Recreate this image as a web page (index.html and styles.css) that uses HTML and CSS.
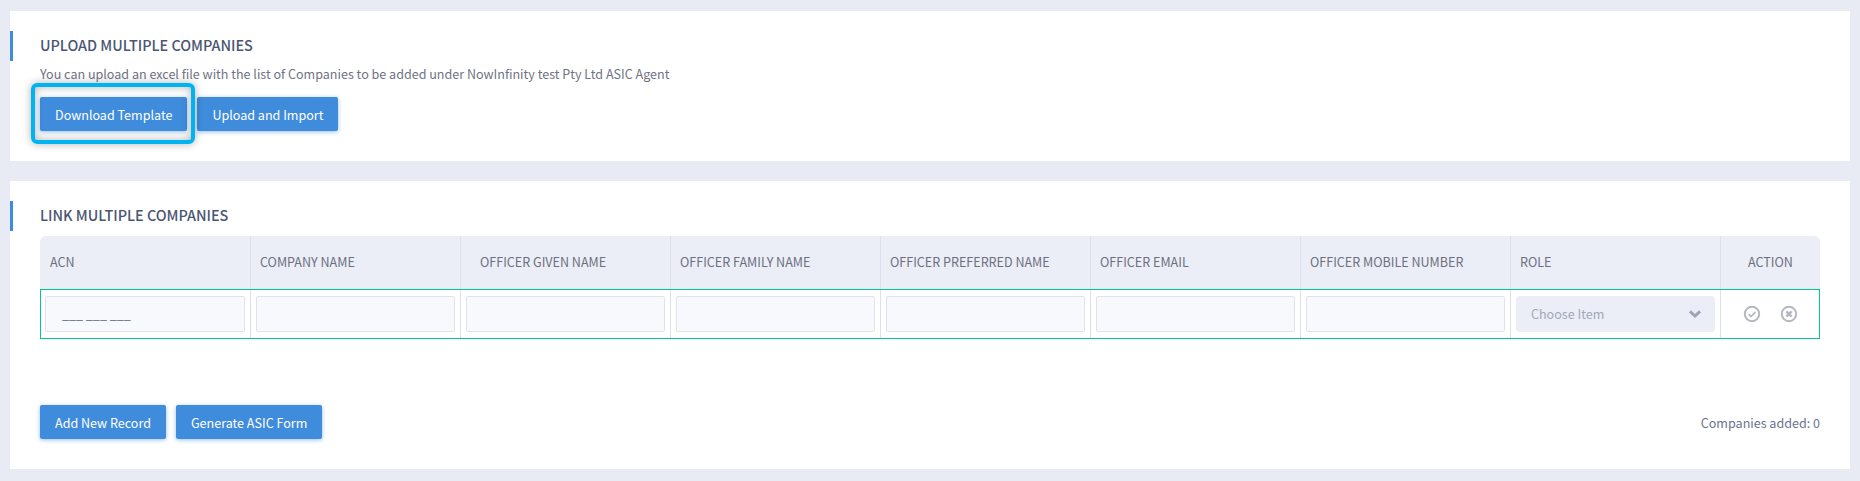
FILE: index.html
```html
<!DOCTYPE html>
<html lang="en">
<head>
<meta charset="utf-8">
<title>Upload Multiple Companies</title>
<link rel="stylesheet" href="styles.css">
</head>
<body>
<section class="card card-upload">
  <h2 class="title">UPLOAD MULTIPLE COMPANIES</h2>
  <p class="lead">You can upload an excel file with the list of Companies to be added under NowInfinity test Pty Ltd ASIC Agent</p>
  <div class="btn-row">
    <span class="highlight-wrap">
      <button class="btn" type="button">Download Template</button>
      <span class="highlight"></span>
    </span>
    <button class="btn" type="button">Upload and Import</button>
  </div>
</section>
<section class="card card-link">
  <h2 class="title">LINK MULTIPLE COMPANIES</h2>
  <div class="table">
    <div class="row head">
      <div class="th">ACN</div>
      <div class="th">COMPANY NAME</div>
      <div class="th th-wide">OFFICER GIVEN NAME</div>
      <div class="th">OFFICER FAMILY NAME</div>
      <div class="th">OFFICER PREFERRED NAME</div>
      <div class="th">OFFICER EMAIL</div>
      <div class="th">OFFICER MOBILE NUMBER</div>
      <div class="th">ROLE</div>
      <div class="th th-action">ACTION</div>
    </div>
    <div class="row body">
      <div class="td"><div class="input input-mask">___ ___ ___</div></div>
      <div class="td"><div class="input"></div></div>
      <div class="td"><div class="input"></div></div>
      <div class="td"><div class="input"></div></div>
      <div class="td"><div class="input"></div></div>
      <div class="td"><div class="input"></div></div>
      <div class="td"><div class="input"></div></div>
      <div class="td">
        <div class="select">
          <span>Choose Item</span>
          <svg class="chev" width="14" height="10" viewBox="0 0 14 10"><path d="M2 2.4 7 7l5-4.6" fill="none" stroke="#9ea3b8" stroke-width="3"/></svg>
        </div>
      </div>
      <div class="td td-action">
        <svg class="act" width="18" height="18" viewBox="0 0 18 18"><circle cx="9" cy="9" r="7.2" fill="none" stroke="#b4b6c2" stroke-width="2"/><path d="M5.6 9.2 8 11.5l4.4-4.6" fill="none" stroke="#b4b6c2" stroke-width="1.6"/></svg>
        <svg class="act" width="18" height="18" viewBox="0 0 18 18"><circle cx="9" cy="9" r="7.2" fill="none" stroke="#b4b6c2" stroke-width="2"/><path d="M6.4 6.4l5.2 5.2M11.6 6.4l-5.2 5.2" fill="none" stroke="#b4b6c2" stroke-width="2.4"/></svg>
      </div>
    </div>
  </div>
  <div class="footer">
    <div class="btn-row">
      <button class="btn" type="button">Add New Record</button>
      <button class="btn" type="button">Generate ASIC Form</button>
    </div>
    <span class="count">Companies added: 0</span>
  </div>
</section>
</body>
</html>
```
FILE: styles.css
```css
* { box-sizing: border-box; }
html, body { height: 100%; }
body {
  margin: 0;
  padding: 11px 10px 12px;
  background: #e8ebf4;
  font-family: "Noto Sans CJK SC", "Noto Sans", sans-serif;
  font-size: 12.55px;
  color: #6b6f80;
  overflow: hidden;
}
.card {
  background: #fff;
  padding: 20px 30px 0;
}
.card-upload { height: 150px; margin-bottom: 20px; }
.card-link { height: 288px; }
.title {
  margin: 0 0 0 -30px;
  padding-left: 27px;
  height: 30px;
  line-height: 28px;
  border-left: 3px solid #3f8cdd;
  font-size: 14.4px;
  font-weight: 500;
  color: #4a5673;
}
.lead {
  margin: 4px 0 0;
  height: 20px;
  line-height: 18px;
  color: #6f7385;
}
.btn-row { display: flex; gap: 10px; }
.card-upload .btn-row { margin-top: 12px; }
.btn {
  height: 34px;
  padding: 0 15px;
  border: 0;
  border-radius: 2px;
  background: #3f8cdd;
  color: #fff;
  font: 400 12.55px "Noto Sans CJK SC", "Noto Sans", sans-serif;
  box-shadow: 0 1px 4px rgba(63, 140, 221, .55);
}
.highlight-wrap { position: relative; display: block; }
.highlight-wrap .btn { display: block; }
.highlight {
  position: absolute;
  left: -9px;
  right: -8px;
  top: -14px;
  bottom: -13px;
  border: 4px solid #00b5ef;
  border-radius: 6px;
  box-shadow: 0 0 8px rgba(0, 0, 0, .3), inset 0 0 8px rgba(0, 0, 0, .3);
}
.table { margin-top: 5px; }
.row {
  display: grid;
  grid-template-columns: repeat(8, 210px) 100px;
}
.head {
  height: 53px;
  background: #ebeef6;
  border-radius: 6px 6px 0 0;
}
.th {
  padding-left: 9px;
  line-height: 51px;
  color: #6b6f80;
  border-left: 1px solid #dde0ea;
}
.th:first-child { padding-left: 10px; border-left: 0; }
.th-wide { padding-left: 19px; }
.th-action { padding: 0; text-align: center; }
.body {
  height: 50px;
  border: 1px solid #00c98d;
  grid-template-columns: 209px repeat(7, 210px) 99px;
}
.td {
  padding: 6px 5px 0;
  border-left: 1px solid #dde0ea;
}
.td:first-child { padding-left: 4px; border-left: 0; }
.input {
  height: 36px;
  border: 1px solid #e0e3ee;
  border-radius: 2px;
  background: #f8f9fd;
}
.input-mask {
  padding: 0 16px;
  line-height: 34px;
  color: #5f6b85;
}
.select {
  height: 36px;
  padding: 0 13px 0 15px;
  display: flex;
  align-items: center;
  justify-content: space-between;
  border-radius: 4px;
  background: #ebeef6;
  color: #a3a6ba;
}
.select span { position: relative; top: -1px; }
.td-action {
  padding: 0;
  display: flex;
  align-items: center;
  justify-content: center;
  gap: 19px;
}
.footer {
  margin-top: 66px;
  display: flex;
  align-items: center;
  justify-content: space-between;
}
.count { color: #6b7390; }
```
